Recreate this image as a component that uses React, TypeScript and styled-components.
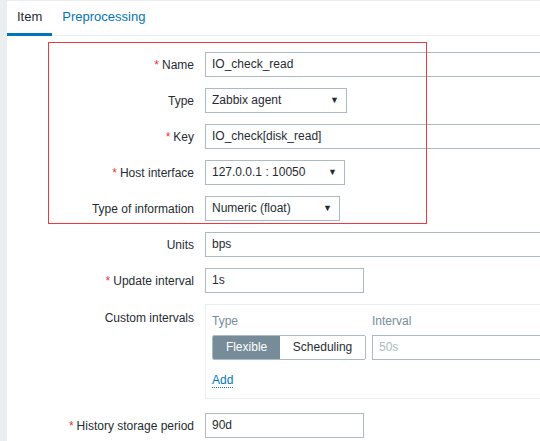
import React from 'react';
import styled, { createGlobalStyle } from 'styled-components';

const GlobalStyle = createGlobalStyle`
  html, body {
    margin: 0;
    padding: 0;
    overflow: hidden;
    background: #ebeef0;
  }
  body {
    font-family: 'Liberation Sans', Arial, sans-serif;
    font-size: 12px;
    color: #1f2c33;
  }
`;

//Styled Components
const Page = styled.div`
  padding: 1px 0 0 7px;
  height: 441px;
  box-sizing: border-box;
`;
const Content = styled.div`
  position: relative;
  background: #fff;
  height: 100%;
`;
const TabBar = styled.ul`
  display: flex;
  list-style: none;
  margin: 0;
  padding: 0;
  height: 34px;
  border-bottom: 1px solid #ebeef0;
`;
const Tab = styled.li<{ $active?: boolean }>`
  padding: 0 10px;
  line-height: 31px;
  font-size: 13px;
  color: ${(p) => (p.$active ? '#1f2c33' : '#0275b8')};
  border-bottom: 3px solid ${(p) => (p.$active ? '#0275b8' : 'transparent')};
  margin-bottom: -1px;
`;
const Form = styled.div`
  display: flex;
  flex-direction: column;
  gap: 11px;
  padding-top: 16px;
`;
const Row = styled.div<{ $top?: boolean }>`
  display: grid;
  grid-template-columns: 187px 1fr;
  column-gap: 11px;
  align-items: ${(p) => (p.$top ? 'start' : 'center')};
`;
const Label = styled.label<{ $top?: boolean }>`
  text-align: right;
  white-space: nowrap;
  padding-top: ${(p) => (p.$top ? '7px' : '0')};
`;
const Required = styled.span`
  color: #e33734;
  margin-right: 3px;
`;
const TextInput = styled.div<{ $width: number }>`
  width: ${(p) => p.$width}px;
  height: 25px;
  box-sizing: border-box;
  border: 1px solid #acbbc2;
  padding: 0 6px;
  line-height: 23px;
  white-space: nowrap;
`;
const Select = styled(TextInput)`
  display: flex;
  justify-content: space-between;
  align-items: center;
`;
const Arrow = styled.span`
  font-size: 9px;
  color: #1f2c33;
  margin-right: 1px;
`;
const IntervalsBox = styled.div`
  width: 453px;
  box-sizing: border-box;
  border: 1px solid #ebeef0;
  padding: 4px 6px 10px 6px;
  margin-bottom: 3px;
`;
const IntervalsGrid = styled.div`
  display: grid;
  grid-template-columns: 154px 1fr;
  column-gap: 6px;
  row-gap: 2px;
`;
const ColHead = styled.div`
  color: #768d99;
  line-height: 24px;
`;
const RadioGroup = styled.div`
  display: flex;
  height: 25px;
  box-sizing: border-box;
  border: 1px solid #acbbc2;
  border-radius: 2px;
  overflow: hidden;
`;
const RadioButton = styled.div<{ $checked?: boolean; $width: number }>`
  width: ${(p) => p.$width}px;
  text-align: center;
  line-height: 23px;
  background: ${(p) => (p.$checked ? '#768d99' : '#fff')};
  color: ${(p) => (p.$checked ? '#fff' : '#1f2c33')};
`;
const Placeholder = styled(TextInput)`
  color: #acbbc2;
`;
const AddLink = styled.a`
  display: inline-block;
  margin-top: 13px;
  color: #0275b8;
  line-height: 14px;
  border-bottom: 1px dotted #0275b8;
`;
const Highlight = styled.div`
  position: absolute;
  left: 41px;
  top: 41px;
  width: 377px;
  height: 180px;
  border: 1px solid #f2383a;
  pointer-events: none;
`;

type Field = {
  label: string;
  required?: boolean;
  value: string;
  width: number;
  select?: boolean;
};

const fields: Field[] = [
  { label: 'Name', required: true, value: 'IO_check_read', width: 453 },
  { label: 'Type', value: 'Zabbix agent', width: 142, select: true },
  { label: 'Key', required: true, value: 'IO_check[disk_read]', width: 453 },
  { label: 'Host interface', required: true, value: '127.0.0.1 : 10050', width: 140, select: true },
  { label: 'Type of information', value: 'Numeric (float)', width: 135, select: true },
  { label: 'Units', value: 'bps', width: 453 },
  { label: 'Update interval', required: true, value: '1s', width: 159 },
];

const FieldRow: React.FC<{ field: Field }> = ({ field }) => (
  <Row>
    <Label>
      {field.required && <Required>*</Required>}
      {field.label}
    </Label>
    {field.select ? (
      <Select $width={field.width}>
        {field.value}
        <Arrow>▼</Arrow>
      </Select>
    ) : (
      <TextInput $width={field.width}>{field.value}</TextInput>
    )}
  </Row>
);

const App: React.FC = () => {
  return (
    <Page>
      <GlobalStyle />
      <Content>
        <TabBar>
          <Tab $active>Item</Tab>
          <Tab>Preprocessing</Tab>
        </TabBar>
        <Form>
          {fields.map((field) => (
            <FieldRow key={field.label} field={field} />
          ))}
          <Row $top>
            <Label $top>Custom intervals</Label>
            <IntervalsBox>
              <IntervalsGrid>
                <ColHead>Type</ColHead>
                <ColHead>Interval</ColHead>
                <RadioGroup>
                  <RadioButton $checked $width={68}>
                    Flexible
                  </RadioButton>
                  <RadioButton $width={86}>Scheduling</RadioButton>
                </RadioGroup>
                <Placeholder $width={300}>50s</Placeholder>
              </IntervalsGrid>
              <AddLink>Add</AddLink>
            </IntervalsBox>
          </Row>
          <FieldRow
            field={{ label: 'History storage period', required: true, value: '90d', width: 159 }}
          />
        </Form>
        <Highlight />
      </Content>
    </Page>
  );
};

export default App;
